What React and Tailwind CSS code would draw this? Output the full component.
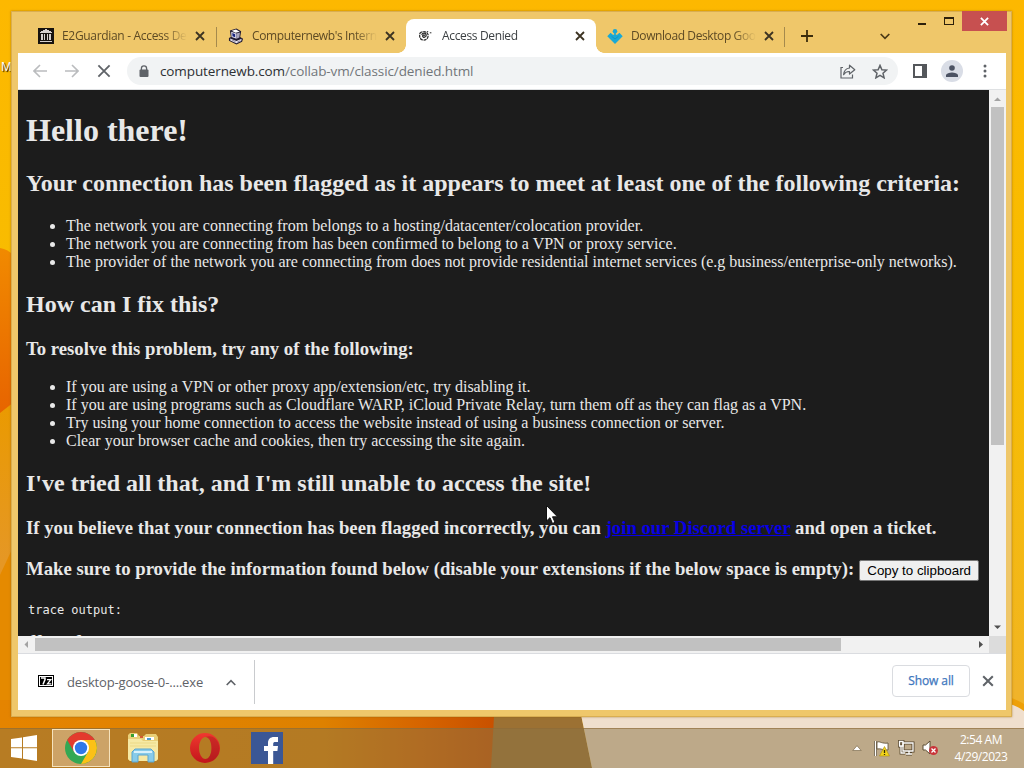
import React from "react";

const PAGE_FONT = "font-['Liberation_Serif',serif]";

const CRITERIA = [
  "The network you are connecting from belongs to a hosting/datacenter/colocation provider.",
  "The network you are connecting from has been confirmed to belong to a VPN or proxy service.",
  "The provider of the network you are connecting from does not provide residential internet services (e.g business/enterprise-only networks)."
];

const FIXES = [
  "If you are using a VPN or other proxy app/extension/etc, try disabling it.",
  "If you are using programs such as Cloudflare WARP, iCloud Private Relay, turn them off as they can flag as a VPN.",
  "Try using your home connection to access the website instead of using a business connection or server.",
  "Clear your browser cache and cookies, then try accessing the site again."
];

function Wallpaper() {
  return (
    <svg className="absolute inset-0" width="1024" height="768" viewBox="0 0 1024 768">
      <defs>
        <linearGradient id="sky" x1="0" y1="0" x2="0" y2="1">
          <stop offset="0" stopColor="#fdb800" />
          <stop offset="0.45" stopColor="#f7bd00" />
          <stop offset="1" stopColor="#f0b32a" />
        </linearGradient>
        <linearGradient id="left" x1="0" y1="0" x2="0" y2="1">
          <stop offset="0" stopColor="#f18a00" />
          <stop offset="0.35" stopColor="#e66000" />
          <stop offset="1" stopColor="#ea7200" />
        </linearGradient>
        <linearGradient id="amber" x1="0" y1="0" x2="0" y2="1">
          <stop offset="0" stopColor="#ea9a00" />
          <stop offset="0.45" stopColor="#e59726" />
          <stop offset="1" stopColor="#e58300" />
        </linearGradient>
        <linearGradient id="strip" x1="0" y1="0" x2="1" y2="0">
          <stop offset="0" stopColor="#e58400" />
          <stop offset="0.65" stopColor="#de8100" />
          <stop offset="0.85" stopColor="#d66400" />
          <stop offset="1" stopColor="#c85000" />
        </linearGradient>
      </defs>
      <rect width="1024" height="768" fill="url(#sky)" />
      <path d="M0 248 Q8 249 14 256 V768 H0Z" fill="url(#left)" />
      <path d="M0 413 L14 402 V768 H0Z" fill="url(#amber)" />
      <path d="M0 575 L14 545 V768 H0Z" fill="#e58a00" />
      <rect y="700" width="497" height="68" fill="url(#strip)" />
      <path d="M495 700 H578 L592 768 H491Z" fill="#9c7133" />
      <path d="M578 700 H1024 V768 H592Z" fill="#f0dfcd" />
      <path d="M1008 690 H1024 V711 Q1016 705 1008 704Z" fill="#eea008" />
      <path d="M1008 680 H1024 V704 Q1016 699 1008 697Z" fill="#f0b32a" />
    </svg>
  );
}

function Cross({ size = 10, width = 1.8, color = "#5f6368" }) {
  return (
    <svg width={size} height={size} viewBox="0 0 10 10" className="shrink-0">
      <path d="M1 1 9 9M9 1 1 9" stroke={color} strokeWidth={width} fill="none" />
    </svg>
  );
}

function LibraryIcon() {
  return (
    <svg width="16" height="16" viewBox="0 0 16 16" shapeRendering="crispEdges">
      <rect width="16" height="16" fill="#17130f" />
      <path d="M8 1 14 4V5H2V4Z" fill="#d5d0cd" />
      <path d="M3 6h2v6H3zM6 6h1v6H6zM9 6h1v6H9zM11 6h2v6h-2z" fill="#d5d0cd" />
      <path d="M2 13h12v1H2z" fill="#d5d0cd" />
    </svg>
  );
}

function ComputerIcon() {
  return (
    <svg width="17" height="17" viewBox="0 0 17 17">
      <path d="M2 2 9 0 14 3 13 9 16 11 15 14 9 17 1 13 1 10 3 9Z" fill="#221c32" />
      <path d="M4 2.5 8.5 1 12.5 3.5 8 4.5Z" fill="#fff" />
      <path d="M3.4 3.5 9 5.4V11L3.7 9Z" fill="#dcdaea" />
      <path d="M4.6 4.9 7.6 6V9.4L4.8 8.2Z" fill="#16227d" />
      <path d="M9 5.3 12.7 4.2 12 9.5 9 11Z" fill="#aaa6bd" />
      <path d="M2.4 10.5 9 13.4 14.5 11 14 13.3 9 15.6 2.4 12.7Z" fill="#e7e4ee" />
      <path d="M4 12 8 14M10 14.4 13 13" stroke="#6e6787" strokeWidth="0.8" />
    </svg>
  );
}

function GlobeDoodle() {
  return (
    <svg width="16" height="16" viewBox="0 0 16 16" fill="none" stroke="#292929">
      <path d="M2 5.2C4 2.8 9 3 10 6.5 10.8 10 8 12.5 5 12 2 11.5 1 8 2 5.2Z" strokeWidth="1.2" strokeDasharray="3 .7" />
      <path d="M3.6 6.8C5 4.2 8 5 8.2 7.1 8.3 9.4 5 10 4.6 8.2 4.4 7 6.2 6.4 6.7 7.8" strokeWidth="1.3" />
      <path d="M2 10.5 4 12M9 4.5 10 3M11.8 4.8h1.6" />
    </svg>
  );
}

function DesktopGooseIcon() {
  return (
    <svg width="17" height="17" viewBox="0 0 17 17" fill="#19a9d6">
      <circle cx="8.5" cy="2.8" r="2.4" />
      <path d="M.3 8.2 3.8 4.4 6.2 6.6H10.8L13.2 4.4 16.7 8.2 8.5 16.6Z" />
      <path d="M7.6 4h1.8v4H7.6z" />
      <path d="M4.8 8.2 8.5 11.2 12.2 8.2" stroke="#0e93c2" fill="none" />
    </svg>
  );
}

function Tab({ className, icon, title, titleClass }) {
  return (
    <div className={`flex h-[34px] shrink-0 items-center ${className}`}>
      <div className="mr-2 flex w-4 shrink-0 justify-center">{icon}</div>
      <div className="w-[125px] overflow-hidden [mask-image:linear-gradient(to_right,#000_82%,transparent)]">
        <span className={`block whitespace-nowrap text-[12px] leading-4 ${titleClass}`}>{title}</span>
      </div>
      <div className="ml-2 flex">
        <Cross color="#3c3322" />
      </div>
    </div>
  );
}

function TitleBar() {
  return (
    <div className="flex h-[42px] items-start">
      <div className="mt-2 flex text-[#5d4a24]">
        <Tab className="w-[189px] pl-5 mr-[9px]" icon={<LibraryIcon />} title="E2Guardian - Access Denied" titleClass="tracking-[-0.32px]" />
        <div className="mt-2 h-5 w-px bg-[#a58a4d]" />
        <Tab className="w-[189px] pl-[11px]" icon={<ComputerIcon />} title="Computernewb's Internet" titleClass="tracking-[-0.38px]" />
        <div className="relative w-[190px] rounded-t-lg bg-white text-[#3c4043]">
          <Tab className="pl-[12px]" icon={<GlobeDoodle />} title="Access Denied" titleClass="tracking-[-0.35px]" />
          <span className="absolute bottom-0 -left-2 h-2 w-2 bg-[radial-gradient(circle_at_0_0,transparent_7.5px,white_8px)]" />
          <span className="absolute bottom-0 -right-2 h-2 w-2 bg-[radial-gradient(circle_at_100%_0,transparent_7.5px,white_8px)]" />
        </div>
        <Tab className="w-[188px] pl-[11px]" icon={<DesktopGooseIcon />} title="Download Desktop Goose" titleClass="tracking-[-0.4px]" />
        <div className="mt-2 h-5 w-px bg-[#a58a4d]" />
      </div>
      <svg className="mt-[19px] ml-4" width="12" height="12" viewBox="0 0 12 12">
        <path d="M6 0V12M0 6H12" stroke="#3b2c0c" strokeWidth="1.8" />
      </svg>
      <svg className="mt-[22px] ml-[67px]" width="10" height="7" viewBox="0 0 10 7">
        <path d="M.7 1 5 5.4 9.3 1" stroke="#4b3a16" strokeWidth="1.7" fill="none" />
      </svg>
      <div className="mt-3 ml-7 h-[2px] w-[8px] bg-[#2d200a]" />
      <div className="mt-[6px] ml-[18px] h-[8px] w-[10px] border border-t-2 border-[#2d200a]" />
      <div className="-mr-px ml-auto flex h-5 w-[45px] items-center justify-center bg-[#c75050]">
        <Cross size={9} width={2} color="#fff" />
      </div>
    </div>
  );
}

function Toolbar() {
  return (
    <div className="flex h-[37px] items-center border-b border-[#dfe1e3] bg-white">
      <svg className="ml-[15px]" width="14" height="14" viewBox="0 0 14 14" fill="none" stroke="#babcbe" strokeWidth="1.6">
        <path d="M14 7H1.2M7 1 1 7 7 13" />
      </svg>
      <svg className="ml-[18px]" width="14" height="14" viewBox="0 0 14 14" fill="none" stroke="#babcbe" strokeWidth="1.6">
        <path d="M0 7H12.8M7 1 13 7 7 13" />
      </svg>
      <div className="ml-[18px]">
        <Cross size={14} width={1.3} />
      </div>
      <div className="ml-[16px] flex h-7 w-[771px] items-center rounded-full bg-[#f1f3f4]">
        <svg className="ml-[12px]" width="10" height="13" viewBox="0 0 10 13">
          <path d="M2.4 5V3.4a2.6 2.6 0 0 1 5.2 0V5" fill="none" stroke="#5f6368" strokeWidth="1.3" />
          <rect x=".5" y="4.5" width="9" height="7.5" rx="1" fill="#5f6368" />
        </svg>
        <span className="ml-[11px] whitespace-nowrap text-[13.5px] leading-5 tracking-[-0.11px] text-[#72767a]">
          <span className="text-[#2d3033]">computernewb.com</span>/collab-vm/classic/denied.html
        </span>
        <svg className="ml-auto" width="16" height="15" viewBox="0 0 16 15" fill="none" stroke="#5f6368" strokeWidth="1.2">
          <path d="M3 3.5H1V14H12.5V10.5" />
          <path d="M9.5 1.2 14.8 5.7 9.5 10V7.5C6.8 7.3 5 8.3 3.6 10.7 4 6.6 6.2 4.4 9.5 4Z" strokeLinejoin="round" />
        </svg>
        <svg className="mr-[10px] ml-[16px]" width="16" height="15" viewBox="0 0 16 15">
          <path d="M8 1.4 9.9 5.7 14.5 6.1 11 9.2 12.1 13.8 8 11.3 3.9 13.8 5 9.2 1.5 6.1 6.1 5.7Z" fill="none" stroke="#5f6368" strokeWidth="1.5" />
        </svg>
      </div>
      <div className="ml-[15px] h-[14px] w-[14px] border-2 border-r-[5px] border-[#54575b]" />
      <div className="ml-[14px] flex h-[22px] w-[22px] items-center justify-center rounded-full bg-[#d9dde6]">
        <svg width="12" height="12" viewBox="0 0 12 12" fill="#4b5263">
          <circle cx="6" cy="3" r="2.8" />
          <path d="M0 12V10C1 6.5 11 6.5 12 10V12Z" />
        </svg>
      </div>
      <svg className="ml-[20px]" width="4" height="14" viewBox="0 0 4 14" fill="#5f6368">
        <circle cx="2" cy="2" r="1.5" />
        <circle cx="2" cy="7" r="1.5" />
        <circle cx="2" cy="12" r="1.5" />
      </svg>
    </div>
  );
}

function DeniedPage() {
  return (
    <div className={`h-[546px] w-[971px] overflow-hidden bg-[#1c1c1c] px-2 pt-[22px] text-[16px] leading-[18px] whitespace-nowrap text-[#e8e8e8] ${PAGE_FONT}`}>
      <h1 className="text-[32px] leading-[37px] font-bold">Hello there!</h1>
      <h2 className="mt-[21px] text-[24px] leading-[27px] font-bold">
        Your connection has been flagged as it appears to meet at least one of the following criteria:
      </h2>
      <ul className="mt-[20px] list-disc pl-10">
        {CRITERIA.map((item) => (
          <li key={item}>{item}</li>
        ))}
      </ul>
      <h2 className="mt-[20px] text-[24px] leading-[27px] font-bold">How can I fix this?</h2>
      <h3 className="mt-[20px] text-[18.72px] leading-[21px] font-bold">
        To resolve this problem, try any of the following:
      </h3>
      <ul className="mt-[19px] list-disc pl-10">
        {FIXES.map((item) => (
          <li key={item}>{item}</li>
        ))}
      </ul>
      <h2 className="mt-[20px] text-[24px] leading-[27px] font-bold">
        I've tried all that, and I'm still unable to access the site!
      </h2>
      <h3 className="mt-[20px] text-[18.72px] leading-[21px] font-bold">
        If you believe that your connection has been flagged incorrectly, you can{" "}
        <a className="text-[#0800e4] underline">join our Discord server</a> and open a ticket.
      </h3>
      <h3 className="mt-[18px] flex items-center text-[18.72px] leading-[26px] font-bold">
        Make sure to provide the information found below (disable your extensions if the below space is empty):
        <button className="mt-[3px] ml-[5px] h-[21px] w-[120px] rounded-[2px] border border-[#767676] bg-[#efefef] font-['Liberation_Sans',sans-serif] text-[13.333px] leading-[15px] font-normal text-black">
          Copy to clipboard
        </button>
      </h3>
      <div className="mt-[21px] pl-[2px] font-['DejaVu_Sans_Mono',monospace] text-[12px] leading-[15px]">trace output:</div>
      <h3 className="mt-[13px] flex gap-[33px] pl-[3px] text-[18.72px] leading-[21px] font-bold">
        <span>ff</span>
        <span>f</span>
      </h3>
    </div>
  );
}

function VerticalScrollbar() {
  return (
    <div className="flex w-[17px] flex-col items-center bg-[#f1f1f1]">
      <svg width="17" height="17" viewBox="0 0 17 17">
        <path d="M5 11 8.5 7.5 12 11Z" fill="#a3a3a3" />
      </svg>
      <div className="h-[338px] w-[13px] bg-[#c1c1c1]" />
      <svg className="mt-auto" width="17" height="17" viewBox="0 0 17 17">
        <path d="M5 6.5 8.5 10 12 6.5Z" fill="#505050" />
      </svg>
    </div>
  );
}

function HorizontalScrollbar() {
  return (
    <div className="flex h-[17px]">
      <div className="flex w-[971px] items-center bg-[#f1f1f1]">
        <svg width="17" height="17" viewBox="0 0 17 17">
          <path d="M10 5 6.5 8.5 10 12Z" fill="#a3a3a3" />
        </svg>
        <div className="h-[13px] w-[806px] bg-[#c1c1c1]" />
        <svg className="ml-auto" width="17" height="17" viewBox="0 0 17 17">
          <path d="M7 5 11 8.5 7 12Z" fill="#505050" />
        </svg>
      </div>
      <div className="w-[17px] bg-[#dcdcdc]" />
    </div>
  );
}

function DownloadShelf() {
  return (
    <div className="flex h-[57px] items-center border-t border-[#dadce0] bg-white">
      <svg className="ml-5 -mt-[3px]" width="16" height="12" viewBox="0 0 16 12" fill="none">
        <path d="M0 0h16v12H0z" fill="#000" />
        <path d="M1 1h14v10H1z" fill="#fff" />
        <path d="M2 2h12v8H2z" fill="#000" />
        <path d="M3 3H7V4.5L5 9.5" stroke="#fff" strokeWidth="1.5" />
        <path d="M9 4.6H12.8L9.5 8.9H13.3" stroke="#fff" strokeWidth="1.3" />
      </svg>
      <span className="ml-[13px] w-[137px] text-[13px] leading-5 tracking-[-0.17px] whitespace-nowrap text-[#5f6368]">desktop-goose-0-....exe</span>
      <svg className="ml-[22px]" width="10" height="7" viewBox="0 0 10 7">
        <path d="M.7 6 5 1.6 9.3 6" stroke="#5f6368" strokeWidth="1.6" fill="none" />
      </svg>
      <div className="ml-[18px] h-[44px] w-px bg-[#c9cbce]" />
      <div className="mb-[2px] ml-auto flex h-8 w-[78px] items-center justify-center rounded border border-[#dadce0] text-[12px] tracking-[-0.1px] text-[#3e76bd] [-webkit-text-stroke:0.25px]">
        Show all
      </div>
      <div className="mr-3 mb-[2px] ml-3">
        <Cross size={12} width={1.7} />
      </div>
    </div>
  );
}

function WindowsLogo() {
  return (
    <svg className="ml-[11px]" width="26" height="26" viewBox="0 0 26 26" fill="#fff">
      <path d="M0 4 11 2.4V12.3H0ZM12 2.2 26 0V12.3H12ZM0 13.3H11V23.6L0 22ZM12 13.3H26V26L12 23.8Z" />
    </svg>
  );
}

function ChromeLogo() {
  return (
    <svg width="32" height="32" viewBox="0 0 32 32">
      <circle cx="16" cy="16" r="16" fill="#34a853" />
      <path d="M29.8 8A16 16 0 0 1 16 32L23 20 16 8Z" fill="#fbc116" />
      <path d="M2.2 8A16 16 0 0 1 29.8 8H16L9.1 20Z" fill="#e33b2e" />
      <circle cx="16" cy="16" r="8" fill="#fff" />
      <circle cx="16" cy="16" r="6.2" fill="#2f78e8" />
    </svg>
  );
}

function ExplorerIcon() {
  return (
    <svg width="32" height="30" viewBox="0 0 32 30">
      <path d="M1 2 3 0H10L12 3H17L19 1H29L31 4V26L29 28H3L1 26Z" fill="#e9cf77" />
      <path d="M4 1h6v3H4zM18 4h9v3h-9z" fill="#fff" />
      <path d="M4 1h3v3H4z" fill="#37a02e" />
      <path d="M13 3h3v2h-3z" fill="#d55a32" />
      <path d="M20 5h4v2h-4z" fill="#4b9ccf" />
      <path d="M1 6H14L16 8H31V26L29 28H3L1 26Z" fill="#f6e9a4" />
      <path d="M3 10H29M3 13H29" stroke="#ecd986" />
      <path d="M5 29V19L8 16H24L27 19V29H21V22H11V29Z" fill="#87cbe9" stroke="#5aa5cf" />
      <path d="M7 19H25" stroke="#d8f1fb" strokeWidth="2" />
    </svg>
  );
}

function OperaLogo() {
  return (
    <svg width="30" height="30" viewBox="0 0 30 30">
      <defs>
        <linearGradient id="opera" x1="0" y1="0" x2="0" y2="1">
          <stop offset="0" stopColor="#f0392f" />
          <stop offset="1" stopColor="#c3151b" />
        </linearGradient>
      </defs>
      <path fillRule="evenodd" d="M15 0A15 15 0 1 0 15 30 15 15 0 1 0 15 0ZM15.5 4C19.2 4 21.5 9 21.5 15S19.2 26 15.5 26 9 21 9 15 11.8 4 15.5 4Z" fill="url(#opera)" />
      <path d="M15.5 4C20 2 24 4 26 6.5 31 12 30 21 25 26 22 28.5 18 27.5 15.5 26 19.2 26 21.5 21 21.5 15S19.2 4 15.5 4Z" fill="#a71f1e" opacity=".45" />
    </svg>
  );
}

function FacebookLogo() {
  return (
    <svg width="32" height="32" viewBox="0 0 32 32">
      <rect width="32" height="32" fill="#3b5795" />
      <path d="M17 32V19H13V14H17V11C17 7 19.5 5 23 5H27V10H24.5C22.8 10 22.2 10.6 22.2 12V14H27L26.4 19H22.2V32Z" fill="#fff" />
    </svg>
  );
}

function Tray() {
  return (
    <div className="ml-auto flex items-center">
      <svg width="10" height="6" viewBox="0 0 10 6">
        <path d="M.8 5.5 5 .7 9.2 5.5Z" fill="#fff" stroke="#6d5b3b" strokeWidth=".6" />
      </svg>
      <svg className="ml-[12px]" width="16" height="17" viewBox="0 0 16 17">
        <path d="M1.5 1V16" stroke="#594a30" strokeWidth="3" />
        <path d="M1.5 1V16" stroke="#fff" strokeWidth="1.5" />
        <path d="M3 2C6 1 8 4 14 3V10C9 10.5 7 8 3 9Z" fill="#fff" stroke="#594a30" strokeWidth=".8" />
        <path d="M10.5 6.5 15.5 16H5.5Z" fill="#f3d51b" stroke="#a78b0d" strokeWidth=".6" />
        <path d="M10.5 10V13M10.5 14V15" stroke="#332b05" strokeWidth="1.3" />
      </svg>
      <svg className="ml-[8px]" width="17" height="16" viewBox="0 0 17 16" fill="none">
        <path d="M5 3H15V11H5ZM8 14H14M11 11V14" stroke="#55452c" strokeWidth="3" />
        <path d="M1.5 1.5H5V6H1.5ZM3 6V13H7" stroke="#55452c" strokeWidth="2.8" />
        <path d="M5 3H15V11H5ZM8 14H14M11 11V14" stroke="#fff" strokeWidth="1.3" />
        <path d="M1.5 1.5H5V6H1.5ZM3 6V13H7" stroke="#fff" strokeWidth="1.3" />
      </svg>
      <svg className="ml-[7px]" width="17" height="16" viewBox="0 0 17 16">
        <path d="M1 5H3.5L8 1V14L3.5 10H1Z" fill="#fff" stroke="#5b4c32" />
        <circle cx="11.5" cy="10.5" r="4.5" fill="#c9343a" />
        <path d="M9.5 8.5 13.5 12.5M13.5 8.5 9.5 12.5" stroke="#fff" strokeWidth="1.3" />
      </svg>
      <div className="mr-[14px] ml-[13px] w-[58px] text-center text-[12px] leading-[17px] tracking-[-0.45px] whitespace-nowrap text-white">
        <div>2:54 AM</div>
        <div>4/29/2023</div>
      </div>
    </div>
  );
}

function Taskbar() {
  return (
    <div className="relative mt-[11px] flex h-10 items-center border-t border-[#8e6a35]/60 bg-[#8a7446]/50 pb-px">
      <WindowsLogo />
      <div className="ml-[15px] flex h-[38px] w-[58px] items-center justify-center border border-[#f6e3bd] bg-[#d9b98c]/65">
        <ChromeLogo />
      </div>
      <div className="ml-[17px]">
        <ExplorerIcon />
      </div>
      <div className="ml-[31px]">
        <OperaLogo />
      </div>
      <div className="ml-[31px]">
        <FacebookLogo />
      </div>
      <Tray />
    </div>
  );
}

export default function App() {
  return (
    <div className="relative h-[768px] w-[1024px] overflow-hidden pt-[11px] font-['Open_Sans','Noto_Sans',sans-serif]">
      <Wallpaper />
      <span className="absolute top-[59px] left-[1px] text-[12px] leading-4 text-white [text-shadow:1px_1px_1px_#000]">M</span>
      <div className="relative ml-[11px] h-[706px] w-[1001px] bg-[#efc76a] pr-[6px] pl-[7px] shadow-[inset_0_0_0_1px_#d9ae52,0_0_2px_#8a5a0099]">
        <TitleBar />
        <Toolbar />
        <div className="flex">
          <DeniedPage />
          <VerticalScrollbar />
        </div>
        <HorizontalScrollbar />
        <DownloadShelf />
      </div>
      <Taskbar />
      <svg className="absolute top-[505px] left-[546px]" width="13" height="20" viewBox="0 0 13 20">
        <path d="M.5.5V16L4 12.7 6.5 18.5 9 17.3 6.5 11.8H11.5Z" fill="#fff" stroke="#111" />
      </svg>
    </div>
  );
}
